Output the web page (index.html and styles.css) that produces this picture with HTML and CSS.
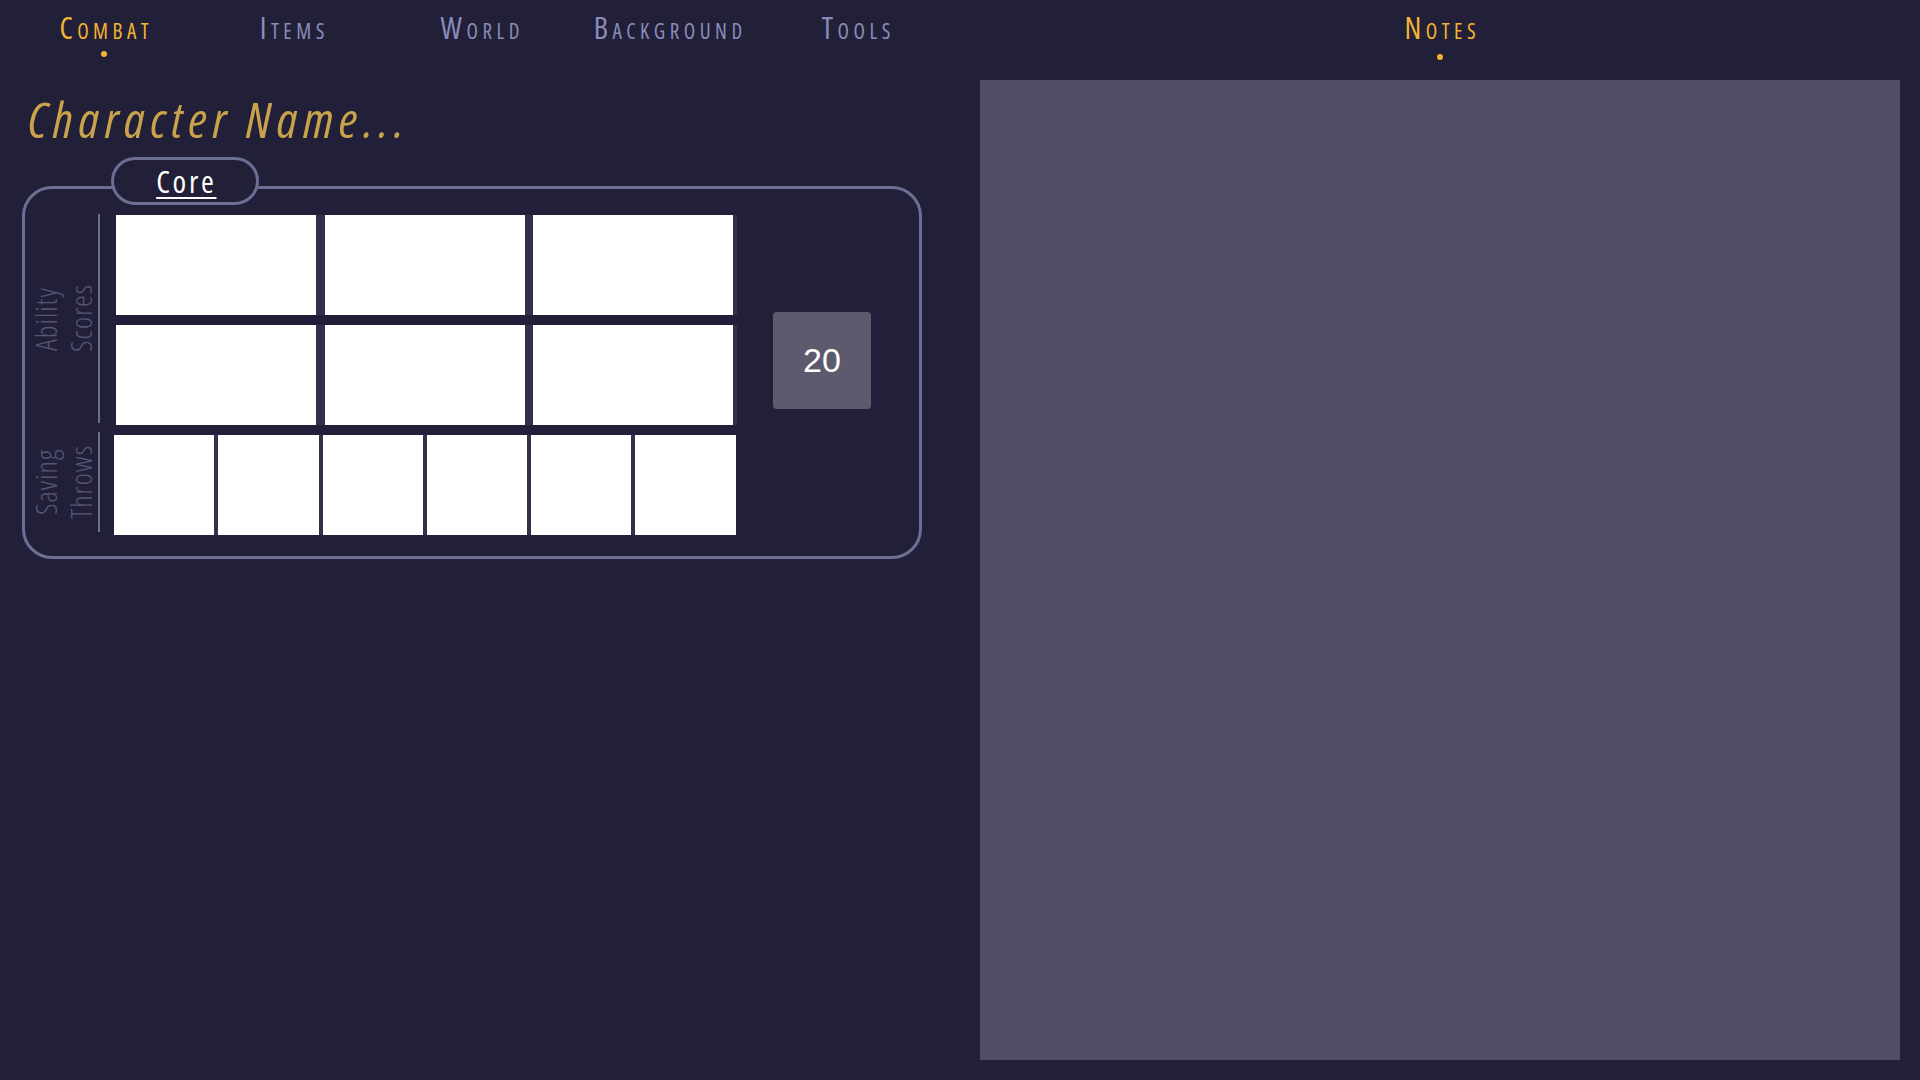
FILE: index.html
```html
<!DOCTYPE html>
<html>
<head>
<meta charset="utf-8">
<title>Character Sheet</title>
<link rel="stylesheet" href="styles.css">
</head>
<body>
<div class="page">
  <section class="left">
    <nav class="tabs">
      <div class="tab active"><span class="tab-label">Combat</span><span class="dot"></span></div>
      <div class="tab"><span class="tab-label">Items</span></div>
      <div class="tab"><span class="tab-label">World</span></div>
      <div class="tab"><span class="tab-label">Background</span></div>
      <div class="tab"><span class="tab-label">Tools</span></div>
    </nav>
    <div class="char-name">Character Name...</div>
    <div class="panel">
      <div class="panel-title"><span>Core</span></div>
      <div class="panel-body">
        <div class="sections">
          <div class="section ability">
            <div class="side-label"><span class="side-text">Ability Scores</span></div>
            <div class="ability-grid">
              <div class="ability-row">
                <div class="cell big"></div><div class="cell big"></div><div class="cell big"></div>
              </div>
              <div class="ability-row">
                <div class="cell big"></div><div class="cell big"></div><div class="cell big"></div>
              </div>
            </div>
          </div>
          <div class="section saving">
            <div class="side-label"><span class="side-text">Saving Throws</span></div>
            <div class="saving-row">
              <div class="cell small"></div><div class="cell small"></div><div class="cell small"></div>
              <div class="cell small"></div><div class="cell small"></div><div class="cell small"></div>
            </div>
          </div>
        </div>
        <div class="stat">20</div>
      </div>
    </div>
  </section>
  <section class="right">
    <nav class="tabs tabs-right">
      <div class="tab active"><span class="tab-label">Notes</span><span class="dot"></span></div>
    </nav>
    <div class="notes"></div>
  </section>
</div>
</body>
</html>
```
FILE: styles.css
```css
html, body {
  margin: 0;
  padding: 0;
  background: #222038;
}
body {
  font-family: "Open Sans", "DejaVu Sans", sans-serif;
  color: #ffffff;
}
.page {
  display: grid;
  grid-template-columns: 960px 960px;
  height: 1080px;
}
.left, .right {
  display: flex;
  flex-direction: column;
}

/* tabs */
.tabs {
  display: flex;
  height: 80px;
  padding-left: 10px;
  box-sizing: border-box;
}
.tabs-right {
  padding-left: 0;
  justify-content: center;
}
.tab {
  width: 188px;
  display: flex;
  flex-direction: column;
  align-items: center;
  padding-top: 8px;
}
.tab-label {
  font-size: 30px;
  line-height: 40px;
  font-variant: small-caps;
  font-stretch: 75%;
  font-weight: 400;
  letter-spacing: 4.5px;
  margin-right: -4.5px;
  color: #8a8cba;
}
.tab.active .tab-label {
  color: #f2b431;
}
.dot {
  width: 6px;
  height: 6px;
  border-radius: 50%;
  background: #f2b431;
  margin-top: 3px;
}
.tabs-right .dot {
  margin-top: 6px;
}

/* character name */
.char-name {
  margin: 9px 0 0 28px;
  font-size: 50px;
  line-height: 60px;
  font-style: italic;
  font-stretch: 75%;
  letter-spacing: 5.5px;
  color: #c9a24c;
}

/* core panel */
.panel {
  position: relative;
  margin: 37px 0 0 22px;
  width: 900px;
  border: 3px solid #6c6e94;
  border-radius: 30px;
  box-sizing: border-box;
}
.panel-title {
  position: absolute;
  left: 86px;
  top: -32px;
  width: 148px;
  height: 48px;
  box-sizing: border-box;
  border: 3px solid #6c6e94;
  border-radius: 24px;
  background: #222038;
  display: flex;
  align-items: center;
  justify-content: center;
}
.panel-title span {
  font-size: 31px;
  line-height: 40px;
  font-stretch: 75%;
  letter-spacing: 2.7px;
  margin-right: -2.7px;
  text-decoration: underline;
  text-decoration-thickness: 2px;
  text-underline-offset: 4px;
  color: #ffffff;
  margin-top: -1px;
}
.panel-body {
  display: flex;
  padding: 25px 0 21px 3px;
}
.sections {
  display: flex;
  flex-direction: column;
  gap: 7px;
}
.section {
  display: flex;
}
.side-label {
  width: 70px;
  border-left: 2px solid #6c6e94;
  writing-mode: vertical-rl;
  transform: rotate(180deg);
  font-size: 29px;
  line-height: 35px;
  font-weight: 300;
  font-stretch: 75%;
  letter-spacing: 1px;
  color: #55557a;
}
.side-text {
  display: block;
  inline-size: min-content;
  margin-inline: auto;
  text-align: center;
}
.section.ability .side-label {
  height: 209px;
}
.section.saving .side-label {
  height: 100px;
}
.ability-grid {
  display: flex;
  flex-direction: column;
  gap: 10px;
  margin: 1px 0 0 16px;
}
.ability-row {
  display: flex;
  gap: 8.5px;
  padding-right: 4px;
  background: #33304a;
}
.cell {
  background: #ffffff;
  height: 100px;
}
.cell.big {
  width: 200px;
}
.saving-row {
  display: flex;
  gap: 4px;
  background: #33304a;
  margin: 3px 0 0 14px;
  height: 100px;
}
.cell.small {
  width: 100.3px;
}
.stat {
  align-self: flex-start;
  margin: 98px 0 0 36px;
  width: 98px;
  height: 97px;
  border-radius: 4px;
  background: #5d5a6d;
  display: flex;
  align-items: center;
  justify-content: center;
  font-family: "Liberation Sans", Arial, sans-serif;
  font-size: 34px;
  color: #ffffff;
}

/* notes */
.notes {
  flex: 1;
  margin: 0 20px 20px 20px;
  background: #4f4d63;
}
```
